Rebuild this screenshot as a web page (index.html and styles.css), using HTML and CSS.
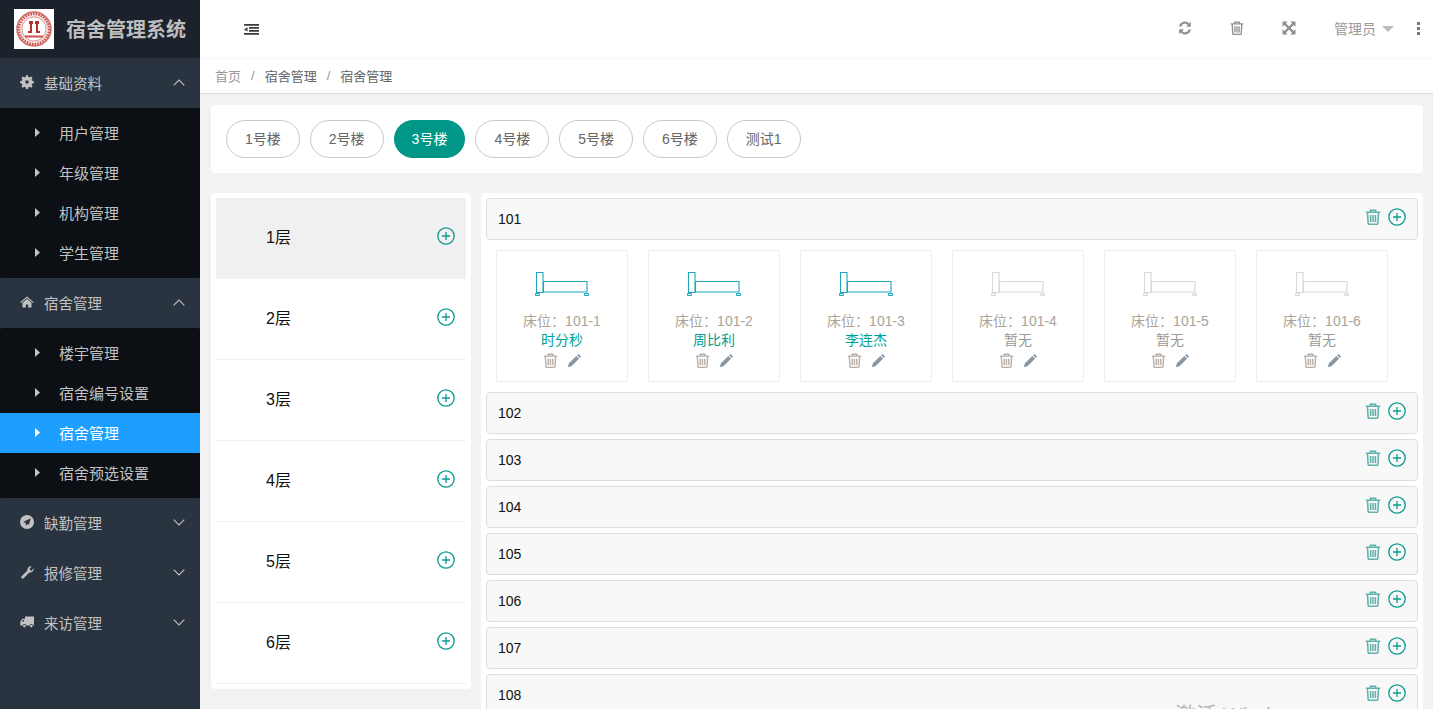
FILE: index.html
```html
<!DOCTYPE html>
<html lang="en">
<head>
<meta charset="UTF-8">
<meta name="viewport" content="width=device-width, initial-scale=1.0">
<title>宿舍管理系统</title>
<link rel="stylesheet" href="styles.css">
</head>
<body>
<svg class="defs" width="0" height="0">
  <symbol id="i-trash" viewBox="0 0 16 16">
    <path d="M.8 3.300h14.400M5.400 3.100V1.300h5.200v1.800M2.500 3.600l.6 10.500q.1 1.200 1.200 1.200h7.400q1.100 0 1.200-1.200l.6-10.500" fill="none" stroke="currentColor" stroke-width="1.500"/>
    <path d="M5.600 6v7M8 6v7M10.400 6v7" fill="none" stroke="currentColor" stroke-width="1.500"/>
  </symbol>
  <symbol id="i-plus" viewBox="0 0 18 18">
    <circle cx="9" cy="9" r="8.200" fill="none" stroke="currentColor" stroke-width="1.300"/>
    <path d="M5 9h8M9 5v8" fill="none" stroke="currentColor" stroke-width="1.300"/>
  </symbol>
  <symbol id="i-pen" viewBox="0 0 14 14">
    <path d="M.8 13.200l.9-3.600 7.600-7.600 2.700 2.700-7.600 7.600zM10 1.300l.9-.9q.5-.4 1 0l1.700 1.700q.4.500 0 1l-.9.9z" fill="currentColor"/>
  </symbol>
  <symbol id="i-bed" viewBox="0 0 54 24">
    <path d="M1.500 .5h6.500v20h-6.500zM8.500 9.500h43.500v10.500h-43.500z" fill="none" stroke="currentColor" stroke-width="1.100"/>
    <path d="M.5 21.500h4v2h-4zM49.500 21.500h4v2h-4z" fill="none" stroke="currentColor" stroke-width="1"/>
  </symbol>
  <symbol id="i-up" viewBox="0 0 12 7"><path d="M.7 6.300l5.300-5.300 5.300 5.300" fill="none" stroke="currentColor" stroke-width="1.100"/></symbol>
  <symbol id="i-down" viewBox="0 0 12 7"><path d="M.7 .7l5.300 5.300 5.300-5.300" fill="none" stroke="currentColor" stroke-width="1.100"/></symbol>
  <symbol id="i-caret" viewBox="0 0 5 9"><path d="M0 0l5 4.500-5 4.500z" fill="currentColor"/></symbol>
</svg>

<div class="layout">
  <aside class="side">
    <div class="logo">
      <svg class="logo-img" viewBox="0 0 40 40">
        <rect width="40" height="40" fill="#fff"/>
        <circle cx="20" cy="20" r="17" fill="#f3dcd9" stroke="#d0706a" stroke-width="1.500"/>
        <circle cx="20" cy="20" r="15.200" fill="none" stroke="#c9504c" stroke-width="2.500" stroke-dasharray="1.500 1.200"/>
        <circle cx="20" cy="20" r="12" fill="#fff" stroke="#d98a86" stroke-width=".8"/>
        <path d="M15 12h4v3h-1v9h-4v-2h2v-7h-1zM21 12h4v3h-1v7h2v2h-4v-9h-1z" fill="#b3322e"/>
        <path d="M11 27.500h18" stroke="#c9504c" stroke-width="2"/>
      </svg>
      <span class="logo-text">宿舍管理系统</span>
    </div>
    <ul class="menu">
      <li class="menu-head">
        <svg class="menu-ico" viewBox="0 0 14 14"><path d="M6 .3h2l.4 1.800 1.300.5 1.500-1 1.400 1.400-1 1.500.5 1.300 1.800.4v2l-1.800.4-.5 1.300 1 1.500-1.400 1.400-1.500-1-1.300.5-.4 1.800h-2l-.4-1.800-1.300-.5-1.500 1-1.400-1.400 1-1.500-.5-1.300-1.800-.4v-2l1.800-.4.5-1.300-1-1.500 1.400-1.400 1.500 1 1.300-.5zM7 5.200a1.800 1.800 0 1 0 0 3.600 1.800 1.800 0 0 0 0-3.600z" fill="currentColor" fill-rule="evenodd"/></svg>
        <span>基础资料</span>
        <svg class="menu-arrow"><use href="#i-up"/></svg>
      </li>
      <li class="sub">
        <a class="sub-item"><svg class="sub-caret"><use href="#i-caret"/></svg>用户管理</a>
        <a class="sub-item"><svg class="sub-caret"><use href="#i-caret"/></svg>年级管理</a>
        <a class="sub-item"><svg class="sub-caret"><use href="#i-caret"/></svg>机构管理</a>
        <a class="sub-item"><svg class="sub-caret"><use href="#i-caret"/></svg>学生管理</a>
      </li>
      <li class="menu-head">
        <svg class="menu-ico" viewBox="0 0 14 14"><path d="M7 1.500l6.800 5.800-.7.800-6.100-5.200-6.100 5.200-.7-.8zM2.500 7.700l4.500-3.800 4.500 3.800v4.800h-3.300v-3h-2.400v3h-3.300z" fill="currentColor"/></svg>
        <span>宿舍管理</span>
        <svg class="menu-arrow"><use href="#i-up"/></svg>
      </li>
      <li class="sub">
        <a class="sub-item"><svg class="sub-caret"><use href="#i-caret"/></svg>楼宇管理</a>
        <a class="sub-item"><svg class="sub-caret"><use href="#i-caret"/></svg>宿舍编号设置</a>
        <a class="sub-item active"><svg class="sub-caret"><use href="#i-caret"/></svg>宿舍管理</a>
        <a class="sub-item"><svg class="sub-caret"><use href="#i-caret"/></svg>宿舍预选设置</a>
      </li>
      <li class="menu-head">
        <svg class="menu-ico" viewBox="0 0 14 14"><path d="M7 0a7 7 0 1 1 0 14A7 7 0 0 1 7 0zM10.800 3.300l-7.800 3.600 2.600.9.300 2.900 1.500-1.800 1.500.9z" fill="currentColor" fill-rule="evenodd"/></svg>
        <span>缺勤管理</span>
        <svg class="menu-arrow"><use href="#i-down"/></svg>
      </li>
      <li class="menu-head">
        <svg class="menu-ico" viewBox="0 0 14 14"><path d="M13.500 3.200q.5 2-1 3.400-1.400 1.200-3.200.8l-5.600 5.800q-1 .9-2 0-.9-1 0-2l5.800-5.600q-.4-1.800.8-3.200 1.400-1.500 3.400-1l-2.100 2.200.5 1.600 1.600.5z" fill="currentColor"/></svg>
        <span>报修管理</span>
        <svg class="menu-arrow"><use href="#i-down"/></svg>
      </li>
      <li class="menu-head">
        <svg class="menu-ico" viewBox="0 0 14 14"><path d="M5 1.500h9v9h-.9a1.800 1.800 0 0 0-3.500 0H6.200a1.800 1.800 0 0 0-3.500 0H.3V6.500l2-2.800H5zM1.700 6.500h2.300V4.900H2.800zM4.400 9.800a1.300 1.300 0 1 1 0 2.600 1.300 1.300 0 0 1 0-2.600zM11.300 9.800a1.300 1.300 0 1 1 0 2.600 1.300 1.300 0 0 1 0-2.600z" fill="currentColor" fill-rule="evenodd"/></svg>
        <span>来访管理</span>
        <svg class="menu-arrow"><use href="#i-down"/></svg>
      </li>
    </ul>
  </aside>

  <div class="main">
    <header class="top">
      <svg class="fold" viewBox="0 0 15 11"><path d="M0 0h15v1.800H0zM5 3h10v1.800H5zM5 6h10v1.800H5zM0 9h15v1.800H0zM3.500 3.200v4.400L0 5.400z" fill="#3a3a3a"/></svg>
      <div class="top-right">
        <svg class="top-ico" viewBox="0 0 14 14"><path d="M12.800 .8v5H8l1.800-1.800A3.800 3.800 0 0 0 3.300 5.400H1A6 6 0 0 1 11.200 2.400zM1.200 13.200v-5H6l-1.800 1.800a3.800 3.800 0 0 0 6.500-1.400H13A6 6 0 0 1 2.800 11.600z" fill="currentColor"/></svg>
        <svg class="top-ico"><use href="#i-trash"/></svg>
        <svg class="top-ico" viewBox="0 0 14 14"><path d="M.5.500h5.200L3.900 2.300l3.100 3.100 3.100-3.100L8.300.500h5.200v5.200l-1.800-1.800L8.600 7l3.100 3.100 1.800-1.800v5.200H8.300l1.800-1.800L7 8.600l-3.100 3.100 1.800 1.800H.5V8.300l1.800 1.800L5.400 7 2.300 3.900.5 5.700z" fill="currentColor"/></svg>
        <span class="user">管理员<i class="user-caret"></i></span>
        <span class="dots"><i></i><i></i><i></i></span>
      </div>
    </header>
    <nav class="crumb">
      <span class="crumb-first">首页</span><span class="crumb-sep">/</span><span>宿舍管理</span><span class="crumb-sep">/</span><span>宿舍管理</span>
    </nav>

    <div class="body">
      <section class="tabs">
        <a class="tab">1号楼</a>
        <a class="tab">2号楼</a>
        <a class="tab on">3号楼</a>
        <a class="tab">4号楼</a>
        <a class="tab">5号楼</a>
        <a class="tab">6号楼</a>
        <a class="tab">测试1</a>
      </section>

      <div class="columns">
        <section class="floors">
          <div class="floor on"><span>1层</span><svg class="plus"><use href="#i-plus"/></svg></div>
          <div class="floor"><span>2层</span><svg class="plus"><use href="#i-plus"/></svg></div>
          <div class="floor"><span>3层</span><svg class="plus"><use href="#i-plus"/></svg></div>
          <div class="floor"><span>4层</span><svg class="plus"><use href="#i-plus"/></svg></div>
          <div class="floor"><span>5层</span><svg class="plus"><use href="#i-plus"/></svg></div>
          <div class="floor"><span>6层</span><svg class="plus"><use href="#i-plus"/></svg></div>
        </section>

        <section class="rooms">
          <div class="room"><span>101</span><span class="room-tools"><svg class="room-del"><use href="#i-trash"/></svg><svg class="plus"><use href="#i-plus"/></svg></span></div>
          <div class="beds">
            <div class="bed used">
              <svg class="bed-ico"><use href="#i-bed"/></svg>
              <p class="bed-no">床位：101-1</p>
              <p class="bed-name">时分秒</p>
              <p class="bed-tools"><svg class="bed-del"><use href="#i-trash"/></svg><svg class="bed-edit"><use href="#i-pen"/></svg></p>
            </div>
            <div class="bed used">
              <svg class="bed-ico"><use href="#i-bed"/></svg>
              <p class="bed-no">床位：101-2</p>
              <p class="bed-name">周比利</p>
              <p class="bed-tools"><svg class="bed-del"><use href="#i-trash"/></svg><svg class="bed-edit"><use href="#i-pen"/></svg></p>
            </div>
            <div class="bed used">
              <svg class="bed-ico"><use href="#i-bed"/></svg>
              <p class="bed-no">床位：101-3</p>
              <p class="bed-name">李连杰</p>
              <p class="bed-tools"><svg class="bed-del"><use href="#i-trash"/></svg><svg class="bed-edit"><use href="#i-pen"/></svg></p>
            </div>
            <div class="bed">
              <svg class="bed-ico"><use href="#i-bed"/></svg>
              <p class="bed-no">床位：101-4</p>
              <p class="bed-name">暂无</p>
              <p class="bed-tools"><svg class="bed-del"><use href="#i-trash"/></svg><svg class="bed-edit"><use href="#i-pen"/></svg></p>
            </div>
            <div class="bed">
              <svg class="bed-ico"><use href="#i-bed"/></svg>
              <p class="bed-no">床位：101-5</p>
              <p class="bed-name">暂无</p>
              <p class="bed-tools"><svg class="bed-del"><use href="#i-trash"/></svg><svg class="bed-edit"><use href="#i-pen"/></svg></p>
            </div>
            <div class="bed">
              <svg class="bed-ico"><use href="#i-bed"/></svg>
              <p class="bed-no">床位：101-6</p>
              <p class="bed-name">暂无</p>
              <p class="bed-tools"><svg class="bed-del"><use href="#i-trash"/></svg><svg class="bed-edit"><use href="#i-pen"/></svg></p>
            </div>
          </div>
          <div class="room"><span>102</span><span class="room-tools"><svg class="room-del"><use href="#i-trash"/></svg><svg class="plus"><use href="#i-plus"/></svg></span></div>
          <div class="room"><span>103</span><span class="room-tools"><svg class="room-del"><use href="#i-trash"/></svg><svg class="plus"><use href="#i-plus"/></svg></span></div>
          <div class="room"><span>104</span><span class="room-tools"><svg class="room-del"><use href="#i-trash"/></svg><svg class="plus"><use href="#i-plus"/></svg></span></div>
          <div class="room"><span>105</span><span class="room-tools"><svg class="room-del"><use href="#i-trash"/></svg><svg class="plus"><use href="#i-plus"/></svg></span></div>
          <div class="room"><span>106</span><span class="room-tools"><svg class="room-del"><use href="#i-trash"/></svg><svg class="plus"><use href="#i-plus"/></svg></span></div>
          <div class="room"><span>107</span><span class="room-tools"><svg class="room-del"><use href="#i-trash"/></svg><svg class="plus"><use href="#i-plus"/></svg></span></div>
          <div class="room"><span>108</span><span class="room-tools"><svg class="room-del"><use href="#i-trash"/></svg><svg class="plus"><use href="#i-plus"/></svg></span></div>
        </section>
      </div>
    </div>
  </div>
</div>
<div class="watermark">激活 Windows</div>
</body>
</html>
```

FILE: styles.css
```css
* {
    box-sizing: border-box;
}

html, body {
    height: 100%;
    margin: 0;
    overflow: hidden;
}

body {
    font-family: "Liberation Sans", "Noto Sans CJK SC", sans-serif;
    font-size: 14px;
    color: #666;
    background-color: #f2f2f2;
}

p {
    margin: 0;
}

ul {
    margin: 0;
    padding: 0;
    list-style: none;
}

.defs {
    position: absolute;
}

.layout {
    display: flex;
    height: 709px;
}

/* sidebar */
.side {
    width: 200px;
    flex: none;
    background-color: #2a3440;
    color: #c2c2c2;
}

.logo {
    height: 58px;
    display: flex;
    align-items: center;
    padding-left: 14px;
    background-color: #1b222c;
}

.logo-img {
    width: 40px;
    height: 40px;
    flex: none;
}

.logo-text {
    margin: -2px 0 0 12px;
    font-size: 20px;
    font-weight: bold;
    color: #bdbdbd;
}

.menu-head {
    height: 50px;
    display: flex;
    align-items: center;
    padding-left: 20px;
    font-size: 14px;
}

.menu-head span {
    font-size: 14.500px;
    margin-top: -2px;
}

.menu-ico {
    width: 14px;
    height: 14px;
    margin: -2px 10px 0 0;
    flex: none;
}

.menu-arrow {
    width: 12px;
    height: 7px;
    margin: -1px 15px 0 auto;
}

.sub {
    padding: 5px 0;
    background-color: #0c0f14;
    border-radius: 2px;
}

.sub-item {
    height: 40px;
    display: flex;
    align-items: center;
    padding: 0 0 2px 35px;
    font-size: 15px;
}

.sub-caret {
    width: 5px;
    height: 9px;
    margin-right: 19px;
}

.sub-item.active {
    background-color: #1e9fff;
    color: #fff;
}

/* top bar */
.main {
    flex: 1;
    min-width: 0;
    display: flex;
    flex-direction: column;
}

.top {
    height: 59px;
    flex: none;
    display: flex;
    align-items: center;
    justify-content: space-between;
    padding: 0 0 2px 44px;
    background-color: #fff;
    border-bottom: 1px solid #f6f6f6;
}

.fold {
    width: 15px;
    height: 11px;
    margin-top: 2px;
}

.top-right {
    display: flex;
    align-items: center;
    color: #8f8f8f;
}

.top-ico {
    width: 14px;
    height: 14px;
    margin-right: 38px;
}

.user {
    display: flex;
    align-items: center;
    font-size: 14px;
    color: #999;
}

.user-caret {
    width: 0;
    height: 0;
    margin: 2px 0 0 6px;
    border-left: 6px solid transparent;
    border-right: 6px solid transparent;
    border-top: 6px solid #bbb;
}

.dots {
    display: flex;
    flex-direction: column;
    gap: 2px;
    margin: 0 13px 0 23px;
}

.dots i {
    width: 3px;
    height: 3px;
    background-color: #777;
}

.crumb {
    height: 35px;
    flex: none;
    display: flex;
    align-items: center;
    padding: 0 0 2px 15px;
    font-size: 13px;
    color: #666;
    background-color: #fff;
    border-bottom: 1px solid #ddd;
}

.crumb-first {
    color: #999;
}

.crumb-sep {
    margin: 0 10px;
    color: #999;
}

/* content */
.body {
    flex: 1;
    min-height: 0;
    padding: 11px 10px 0 11px;
}

.tabs {
    height: 68px;
    display: flex;
    align-items: center;
    gap: 10px;
    padding-left: 15px;
    background-color: #fff;
    border-radius: 4px;
}

.tab {
    height: 38px;
    line-height: 36px;
    padding: 0 18px;
    font-size: 14px;
    color: #666;
    background-color: #fff;
    border: 1px solid #c9c9c9;
    border-radius: 19px;
}

.tab.on {
    padding: 0 17px;
    color: #fff;
    background-color: #009688;
    border-color: #009688;
}

.columns {
    display: flex;
    align-items: flex-start;
    gap: 10px;
    margin-top: 20px;
}

.floors {
    width: 260px;
    flex: none;
    padding: 5px;
    background-color: #fff;
    border-radius: 4px;
}

.floor {
    height: 81px;
    display: flex;
    align-items: center;
    justify-content: space-between;
    padding: 0 11px 4px 50px;
    font-size: 16px;
    color: #111;
    border-bottom: 1px solid #f0f0f0;
}

.floor.on {
    background-color: #f0f0f0;
}

.plus {
    width: 18px;
    height: 18px;
    color: #0a9a90;
}

.rooms {
    flex: 1;
    min-width: 0;
    padding: 5px;
    background-color: #fff;
    border-radius: 4px;
}

.room {
    height: 42px;
    display: flex;
    align-items: center;
    justify-content: space-between;
    padding: 0 11px;
    margin-bottom: 5px;
    font-size: 14px;
    color: #111;
    background-color: #f8f8f8;
    border: 1px solid #ddd;
    border-radius: 4px;
}

.room-tools {
    display: flex;
    align-items: center;
    gap: 7px;
    margin-top: -4px;
}

.room-del {
    width: 16px;
    height: 16px;
    margin-top: -1px;
    color: #5fb0aa;
}

.beds {
    display: flex;
    gap: 20px;
    padding: 5px 10px 10px;
}

.bed {
    width: 132px;
    height: 132px;
    padding-top: 21px;
    text-align: center;
    font-size: 14px;
    line-height: 19px;
    color: #bcbcbc;
    border: 1px solid #eee;
}

.bed-ico {
    display: block;
    width: 54px;
    height: 24px;
    margin: 0 auto 16px;
    color: #d8d8d8;
}

.used .bed-ico {
    color: #1fa5be;
}

.bed-no {
    color: #a9a39c;
}

.bed-name {
    color: #999;
}

.used .bed-name {
    color: #009f95;
}

.bed-tools {
    display: flex;
    justify-content: center;
    align-items: center;
    gap: 9px;
    margin-top: 3px;
}

.bed-del {
    width: 15px;
    height: 15px;
    color: #b8aea6;
}

.bed-edit {
    width: 14px;
    height: 14px;
    color: #8a97a5;
}

.watermark {
    position: absolute;
    left: 1175px;
    top: 698px;
    font-size: 21px;
    color: #b5b5b5;
}
```
